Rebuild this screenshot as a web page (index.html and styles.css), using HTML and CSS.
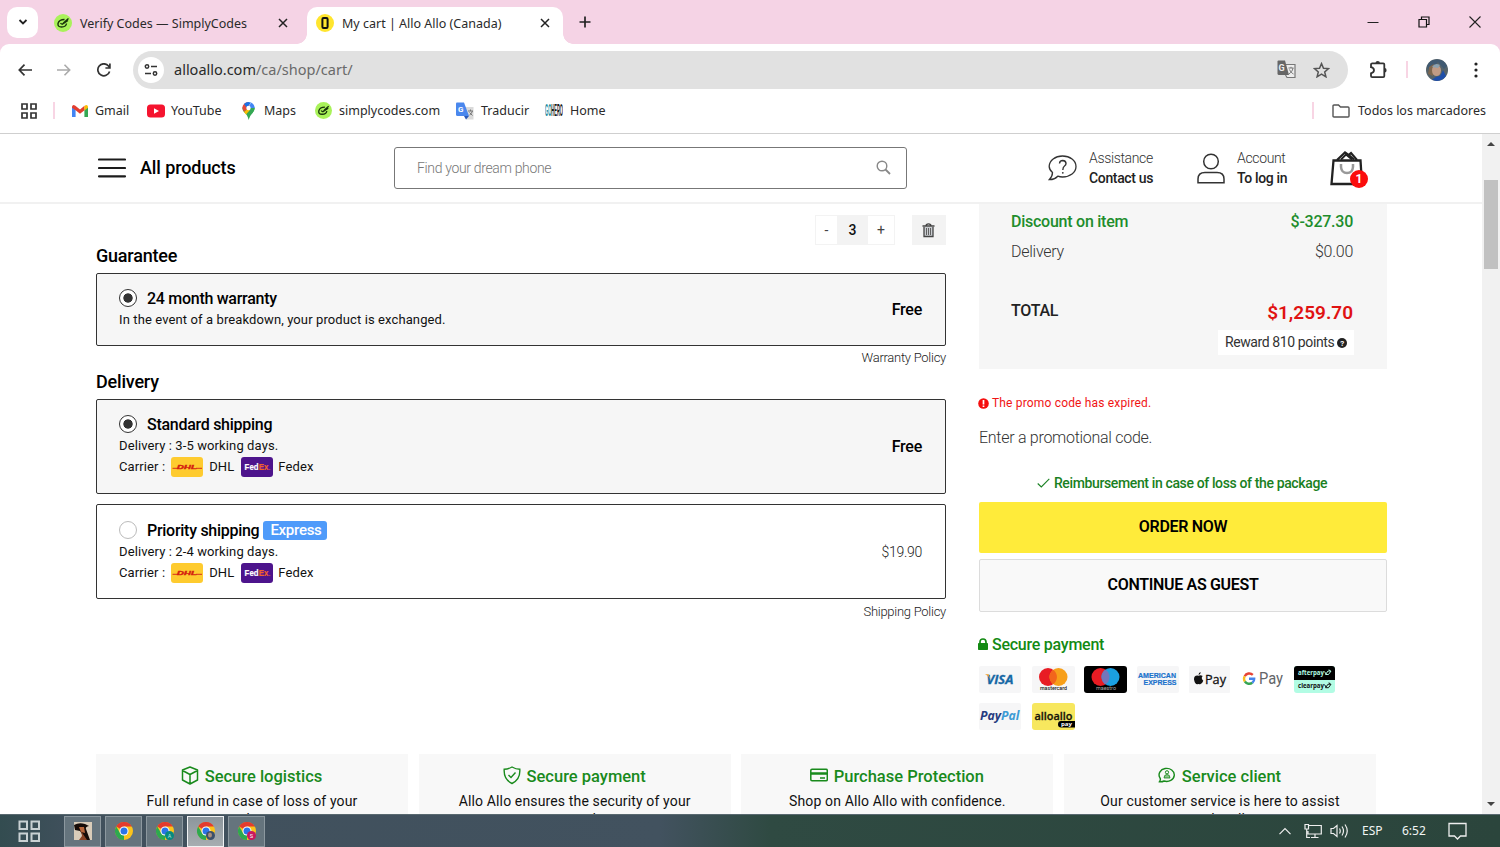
FILE: index.html
```
<!DOCTYPE html>
<html lang="en">
<head>
    <meta charset="UTF-8">
    <title>My cart | Allo Allo (Canada)</title>
    <link rel="stylesheet" href="styles.css">
</head>
<body>
    <svg class="defs">
        <symbol id="x" viewBox="0 0 10 10"><path d="M1 1l8 8M9 1L1 9" stroke="#222" stroke-width="1.5"/></symbol>
        <symbol id="simply" viewBox="0 0 18 18">
            <circle cx="9" cy="9" r="9" fill="#a9f25a"/>
            <path d="M10.500 5.500Q5 5.500 4 9.500Q3.500 13 7.500 13Q12 13 12.500 9.500M6.500 9Q8 11.500 10 8.500L14.500 4.500M8 10.500L14 6.500" fill="none" stroke="#18330b" stroke-width="1.400"/>
        </symbol>
        <symbol id="chrome" viewBox="0 0 18 18">
            <circle cx="9" cy="9" r="9" fill="#fbc31b"/>
            <path d="M9 9L1.200 4.500A9 9 0 0 1 16.800 4.500H9Z" fill="#e33b2e"/>
            <path d="M1.200 4.500L5.200 11.250L9 13.500L9 18A9 9 0 0 1 1.200 4.500Z" fill="#2da94f"/>
            <circle cx="9" cy="9" r="4.500" fill="#fff"/>
            <circle cx="9" cy="9" r="3.500" fill="#2b74e8"/>
        </symbol>
        <symbol id="dhl" viewBox="0 0 32 20">
            <rect width="32" height="20" rx="3" fill="#fecb2f"/>
            <path d="M1.500 11.300h6M25 11.300h6" stroke="#d8301b" stroke-width="1"/>
            <text x="6" y="12.300" textLength="20" lengthAdjust="spacingAndGlyphs" font-family="Liberation Sans" font-size="6" font-weight="bold" font-style="italic" fill="#d4200f" stroke="#d4200f" stroke-width=".4">DHL</text>
        </symbol>
        <symbol id="fedex" viewBox="0 0 32 20">
            <rect width="32" height="20" rx="3" fill="#4d148c"/>
            <text x="3.500" y="13" textLength="24" lengthAdjust="spacingAndGlyphs" font-family="Liberation Sans" font-size="8.500" font-weight="bold" fill="#fff" stroke="#fff" stroke-width=".2">Fed<tspan fill="#f2622a" stroke="#f2622a">Ex</tspan></text>
            <circle cx="28.800" cy="12.500" r=".6" fill="#f2622a"/>
        </symbol>
    </svg>

    <!-- browser -->
    <div class="tabstrip">
        <div class="tab-search"><svg width="10" height="8" viewBox="0 0 10 8"><path d="M1.500 2L5 5.500L8.500 2" fill="none" stroke="#222" stroke-width="1.800"/></svg></div>
        <div class="tab">
            <svg width="18" height="18"><use href="#simply"/></svg>
            <span>Verify Codes — SimplyCodes</span>
            <svg class="close" width="10" height="10"><use href="#x"/></svg>
        </div>
        <div class="tab active">
            <svg width="18" height="18" viewBox="0 0 18 18"><circle cx="9" cy="9" r="9" fill="#ffe52e"/><rect x="6.400" y="4" width="5.200" height="10" rx="1.200" fill="none" stroke="#111" stroke-width="2"/></svg>
            <span>My cart | Allo Allo (Canada)</span>
            <svg class="close" width="10" height="10"><use href="#x"/></svg>
        </div>
        <svg class="plus" width="12" height="12" viewBox="0 0 12 12"><path d="M6 .5v11M.5 6h11" stroke="#222" stroke-width="1.700"/></svg>
        <div class="window-controls">
            <svg width="12" height="12" viewBox="0 0 12 12"><path d="M.5 6.500h11" stroke="#222"/></svg>
            <svg width="12" height="12" viewBox="0 0 12 12"><path d="M1 3.500h7.500V11H1zM3.500 3V1H11v7.500H9" fill="none" stroke="#111" stroke-width="1.200"/></svg>
            <svg width="12" height="12" viewBox="0 0 12 12"><path d="M.5 .5l11 11M11.500 .5l-11 11" stroke="#222" stroke-width="1.100"/></svg>
        </div>
    </div>

    <div class="toolbar-wrap">
    <div class="toolbar">
        <svg class="back" width="14" height="12" viewBox="0 0 14 12"><path d="M6.500 .7L1.300 6l5.200 5.300M1.500 6H14" fill="none" stroke="#333" stroke-width="1.700"/></svg>
        <svg class="forward" width="14" height="12" viewBox="0 0 14 12"><path d="M7.500 .7L12.700 6l-5.200 5.300M12.500 6H0" fill="none" stroke="#aaa" stroke-width="1.600"/></svg>
        <svg class="reload" width="14" height="14" viewBox="0 0 14 14"><path d="M12.600 8.500A6 6 0 1 1 11.500 3L12.700 4.500M12.900 .5V5H8.400" fill="none" stroke="#333" stroke-width="1.700"/></svg>
        <div class="address">
            <span class="site-info"><svg width="14" height="12" viewBox="0 0 14 12"><g fill="none" stroke="#333" stroke-width="1.500"><circle cx="3" cy="2.500" r="1.700"/><path d="M7 2.500h6M1 9.500h6"/><circle cx="11" cy="9.500" r="1.700"/></g></svg></span>
            <span class="url">alloallo.com<i>/ca/shop/cart/</i></span>
            <svg class="translate" width="19" height="19" viewBox="0 0 19 19"><path d="M9 4.500h9v13h-8L8.500 15" fill="#ededed" stroke="#777" stroke-width="1.200"/><path d="M.5 1.500Q.5 .5 1.500 .5H8L12 15H2Q.5 15 .5 13.500z" fill="#666"/><text x="1.500" y="11" font-family="Roboto" font-size="9" font-weight="bold" fill="#eee">G</text><path d="M11.500 8h5M14 6.800V8M16 8c-.5 3-2 4.500-4 6M12.500 9.500c1 2 2 3.500 4 4.500" fill="none" stroke="#777"/></svg>
            <svg class="star" width="17" height="16" viewBox="0 0 17 16"><path d="M8.500 1.600l2 4.600 5 .4-3.800 3.300 1.200 4.900-4.400-2.600-4.400 2.600 1.200-4.900L1.500 6.600l5-.4z" fill="none" stroke="#555" stroke-width="1.500"/></svg>
        </div>
        <svg class="puzzle" width="19" height="19" viewBox="0 0 19 19"><path d="M2.500 3.300H14.200Q15.300 3.300 15.300 4.400V16Q15.300 17.200 14.200 17.200H3.200Q2 17.200 2 16V13.300Q5 12.500 5 10.200Q5 8 2 7.200V4.400Q2 3.300 3.200 3.300Z" fill="none" stroke="#333" stroke-width="1.800"/><path d="M6.500 3a2.200 2 0 0 1 4.400 0zM15.600 8a2 2.200 0 0 1 0 4.400z" fill="#333"/></svg>
        <span class="pink-line"></span>
        <svg class="avatar" width="22" height="22" viewBox="0 0 22 22"><circle cx="11" cy="11" r="11" fill="#55636a"/><path d="M1 7A11 11 0 0 1 21 7L18 10L12 3L3 14Z" fill="#405a72"/><path d="M3 8L8 5L7 17L2 15Z" fill="#7d674f"/><ellipse cx="10.500" cy="11.500" rx="4.500" ry="5.500" fill="#c09b85"/><path d="M6 8Q9 3 14 6L12 9Z" fill="#8ca2b0"/><path d="M6 20.800Q10 17 14 17Q16 14 17 11L20 17A11 11 0 0 1 6 20.800Z" fill="#1f4faa"/></svg>
        <svg class="dots" width="4" height="16" viewBox="0 0 4 16"><g fill="#222"><circle cx="2" cy="2" r="1.600"/><circle cx="2" cy="8" r="1.600"/><circle cx="2" cy="14" r="1.600"/></g></svg>
    </div>
    <div class="bookmarks">
        <svg class="apps" width="16" height="16" viewBox="0 0 16 16"><path d="M1 1h5v5H1zM10 1h5v5h-5zM1 10h5v5H1zM10 10h5v5h-5z" fill="none" stroke="#333" stroke-width="1.700"/></svg>
        <span class="pink-line"></span>
        <div class="bm b1"><svg width="16" height="12" viewBox="0 0 16 12"><path d="M0 1.500V12h3.600V4.500z" fill="#4285f4"/><path d="M16 1.500V12h-3.600V4.500z" fill="#34a853"/><path d="M0 1.800Q.6-.8 3 .6L8 4.400 12.500 .8V5.300L8 8.800 3.600 5.300 0 2.800z" fill="#e33e2f"/><path d="M12.400 .9Q15.500-1.200 16 1.800V2.800L12.400 5.400z" fill="#fbbc04"/></svg><span>Gmail</span></div>
        <div class="bm b2"><svg width="18" height="14" viewBox="0 0 18 14"><rect width="18" height="13" y=".5" rx="3.500" fill="#f5142f"/><path d="M7 4.200v5.600L12 7z" fill="#fff"/></svg><span>YouTube</span></div>
        <div class="bm b3"><svg width="13" height="18" viewBox="0 0 13 18"><path d="M6.500 18Q6 13.500 2 10A6.300 6.300 0 0 1 .3 5.500L12.700 5.500Q13 8.500 10.500 11T6.500 18z" fill="#34a853"/><path d="M.3 6A6.200 6.200 0 0 1 6.500 0L8 6L2 10z" fill="#e5493a"/><path d="M2 2Q5-1 9 .6L5 6z" fill="#1a73e8"/><path d="M9 .5Q12.500 2 12.700 6L6 7z" fill="#4285f4"/><path d="M12.700 6Q12.500 9 10 11.500L2 10 6.500 6z" fill="#34a853"/><path d="M2 10L6.500 6 8 8 4 12.500z" fill="#fbbc04"/><circle cx="6.500" cy="6" r="2.200" fill="#fff"/></svg><span>Maps</span></div>
        <div class="bm b4"><svg width="17" height="17"><use href="#simply"/></svg><span>simplycodes.com</span></div>
        <div class="bm b5"><svg width="18" height="18" viewBox="0 0 18 18"><path d="M8 5h9.500v12.500H10z" fill="#dadada"/><path d="M0 1.500Q0 .5 1 .5H8L13 14H1.500Q0 14 0 12.500z" fill="#4a87ed"/><path d="M8 14h5l-3 3.500z" fill="#2857b8"/><text x="2" y="9.800" font-family="Roboto" font-size="8" font-weight="bold" fill="#fff">G</text><path d="M12 9h5M14.500 7.500V9M16.500 9Q15.500 12 13.500 13M13.500 10.500L16.500 13.500" stroke="#777" fill="none"/></svg><span>Traducir</span></div>
        <div class="bm b6"><svg width="18" height="15" viewBox="0 0 18 15"><g transform="scale(.36 1.150)"><text x="0" y="11.500" textLength="50" lengthAdjust="spacingAndGlyphs" font-family="Liberation Sans" font-size="14" font-weight="bold" fill="#1d8ba1">GO<tspan fill="#1c1c1c">HERO</tspan></text></g></svg><span>Home</span></div>
        <span class="pink-line right"></span>
        <div class="bm b7"><svg width="18" height="14" viewBox="0 0 18 14"><path d="M1 2Q1 1 2 1h4.500l2 2H16q1 0 1 1v8q0 1-1 1H2q-1 0-1-1z" fill="none" stroke="#555" stroke-width="1.400"/></svg><span>Todos los marcadores</span></div>
    </div>
    </div>

    <!-- page -->
    <div class="viewport">
        <div class="page">
            <header>
                <svg class="burger" width="28" height="20" viewBox="0 0 28 20"><path d="M1 1.500h26M1 10h26M1 18.300h26" stroke="#1c1c1c" stroke-width="2.200" stroke-linecap="round"/></svg>
                <a class="all-products">All products</a>
                <div class="search">
                    <span>Find your dream phone</span>
                    <svg width="15" height="15" viewBox="0 0 15 15"><circle cx="6" cy="6" r="4.800" fill="none" stroke="#888" stroke-width="1.400"/><path d="M9.500 9.500l4.500 4.500" stroke="#888" stroke-width="1.800"/></svg>
                </div>
                <div class="help">
                    <svg width="29" height="26" viewBox="0 0 29 26"><path d="M4.500 17.500Q1 14.500 1.200 11C1.500 5.500 7 1 14.500 1S28 5.500 28 11.500 22 22 14.500 22Q12 22 9.800 21.200Q6 25 1.200 24.700Q4.500 21.500 4.500 17.500Z" fill="none" stroke="#333" stroke-width="1.300"/><path d="M11.500 8.500Q11.700 5.500 14.700 5.500Q18 5.700 18 8.500Q18 10 16.500 11T14.800 15" fill="none" stroke="#333" stroke-width="1.400"/><circle cx="14.800" cy="17.800" r=".9" fill="#333"/></svg>
                    <div><small>Assistance</small><b>Contact us</b></div>
                </div>
                <div class="account">
                    <svg width="28" height="31" viewBox="0 0 28 31"><circle cx="14" cy="8.500" r="7.300" fill="none" stroke="#333" stroke-width="1.500"/><path d="M1 29.800V26Q1 19.500 8 19.500H20Q27 19.500 27 26V29.800Z" fill="none" stroke="#333" stroke-width="1.500"/></svg>
                    <div><small>Account</small><b>To log in</b></div>
                </div>
                <div class="bag">
                    <svg width="34" height="35" viewBox="0 0 34 35"><path d="M3.500 9.500H30.500L32 33H1.500Z" fill="none" stroke="#222" stroke-width="2.300"/><path d="M7 9L15 1.500L18.500 4L21 2L27 9" fill="none" stroke="#222" stroke-width="2.200"/><path d="M11 8.500L16 3.500L22 8.500M19 4L24 8.500" stroke="#222" stroke-width="1.800" fill="none"/><path d="M11 13V16Q11.500 22 17 22T23 16V13" fill="none" stroke="#999" stroke-width="2.500"/></svg>
                    <span class="badge">1</span>
                </div>
            </header>

            <main>
                <section class="options">
                    <div class="qty">
                        <span class="minus">-</span><span class="count">3</span><span class="add">+</span>
                        <span class="trash"><svg width="13" height="15" viewBox="0 0 13 15"><path d="M.5 3h12M4 3Q4 .8 6.500 .8T9 3" fill="none" stroke="#444" stroke-width="1.300"/><path d="M2 4v9.500h9V4" fill="#c9ccd0" stroke="#444" stroke-width="1.300"/><path d="M4.500 5v7M6.500 5v7M8.500 5v7" stroke="#555" stroke-width=".9"/></svg></span>
                    </div>
                    <h3 class="first">Guarantee</h3>
                    <div class="card selected w">
                        <div>
                            <p class="title"><i class="radio on"></i><span>24 month warranty</span></p>
                            <p>In the event of a breakdown, your product is exchanged.</p>
                        </div>
                        <b>Free</b>
                    </div>
                    <p class="policy">Warranty Policy</p>
                    <h3>Delivery</h3>
                    <div class="card selected">
                        <div>
                            <p class="title"><i class="radio on"></i><span>Standard shipping</span></p>
                            <p>Delivery : 3-5 working days.</p>
                            <p class="carrier">Carrier : <svg class="dhl" width="32" height="20"><use href="#dhl"/></svg> DHL <svg class="fedex" width="32" height="20"><use href="#fedex"/></svg> Fedex</p>
                        </div>
                        <b>Free</b>
                    </div>
                    <div class="card last">
                        <div>
                            <p class="title"><i class="radio"></i><span>Priority shipping</span><em>Express</em></p>
                            <p>Delivery : 2-4 working days.</p>
                            <p class="carrier">Carrier : <svg class="dhl" width="32" height="20"><use href="#dhl"/></svg> DHL <svg class="fedex" width="32" height="20"><use href="#fedex"/></svg> Fedex</p>
                        </div>
                        <span class="price">$19.90</span>
                    </div>
                    <p class="policy">Shipping Policy</p>
                </section>

                <aside>
                    <div class="summary">
                        <div class="row discount"><span>Discount on item</span><span class="amount">$-327.30</span></div>
                        <div class="row light"><span>Delivery</span><span class="amount">$0.00</span></div>
                        <div class="row total"><span>TOTAL</span><strong>$1,259.70</strong></div>
                        <div class="reward"><span>Reward 810 points</span><svg width="10" height="10" viewBox="0 0 10 10"><circle cx="5" cy="5" r="5" fill="#222"/><text x="5" y="7.800" text-anchor="middle" font-family="Roboto" font-size="8" font-weight="bold" fill="#fff">?</text></svg></div>
                    </div>
                    <p class="error"><svg width="11" height="11" viewBox="0 0 11 11"><circle cx="5.500" cy="5.500" r="5.300" fill="#f50f0f"/><path d="M5.500 2v4.500M5.500 7.500V9" stroke="#fff" stroke-width="1.700"/></svg><span>The promo code has expired.</span></p>
                    <p class="promo">Enter a promotional code.</p>
                    <p class="refund"><svg width="13" height="10" viewBox="0 0 13 10"><path d="M.7 5.500L4.300 9L12.300 .8" fill="none" stroke="#198022" stroke-width="1.100"/></svg><span>Reimbursement in case of loss of the package</span></p>
                    <a class="btn order">ORDER NOW</a>
                    <a class="btn guest">CONTINUE AS GUEST</a>
                    <p class="secure"><svg width="10" height="12" viewBox="0 0 10 12"><rect y="5" width="10" height="7" rx=".8" fill="#138a13"/><path d="M2 5.500V4Q2 1 5 1T8 4V5.500" fill="none" stroke="#138a13" stroke-width="1.700"/></svg><span>Secure payment</span></p>
                    <div class="pays">
                        <svg width="42" height="27" viewBox="0 0 42 27"><rect width="42" height="27" rx="2" fill="#f6f6f7"/><text x="7.500" y="17.500" textLength="27" lengthAdjust="spacingAndGlyphs" font-family="Open Sans" font-size="13" font-weight="bold" font-style="italic" fill="#1668a5" stroke="#1668a5" stroke-width=".3">VISA</text><path d="M6 8.300h3.500l1.800 5Q9.500 9.500 6 8.300z" fill="#f0a02a"/></svg>
                        <svg width="43" height="27" viewBox="0 0 43 27"><rect width="43" height="27" rx="2" fill="#f6f6f7"/><circle cx="16" cy="11" r="9" fill="#e81c24"/><circle cx="26.500" cy="11" r="9" fill="#f79f1a"/><path d="M21.200 3.700a9 9 0 0 1 0 14.600a9 9 0 0 1 0-14.600z" fill="#f2651c"/><text x="8" y="24" textLength="27" lengthAdjust="spacingAndGlyphs" font-family="Roboto" font-size="5.500" font-weight="500" fill="#222">mastercard</text></svg>
                        <svg width="43" height="27" viewBox="0 0 43 27"><rect width="43" height="27" rx="3" fill="#000"/><circle cx="16.500" cy="11" r="9" fill="#e81c24"/><circle cx="26.500" cy="11" r="9" fill="#1ba0e1"/><path d="M21.500 3.500a9 9 0 0 1 0 15a9 9 0 0 1 0-15z" fill="#7476bb"/><text x="12" y="23.800" textLength="20" lengthAdjust="spacingAndGlyphs" font-family="Roboto" font-size="5.500" fill="#aaa">maestro</text></svg>
                        <svg width="42" height="27" viewBox="0 0 42 27"><rect width="42" height="27" rx="2" fill="#f6f6f7"/><g font-family="Liberation Sans" font-size="7.200" font-weight="bold" fill="#1b72cc" stroke="#1b72cc" stroke-width=".2"><text x="1" y="12.200" textLength="38" lengthAdjust="spacingAndGlyphs">AMERICAN</text><text x="6.500" y="18.500" textLength="33" lengthAdjust="spacingAndGlyphs">EXPRESS</text></g></svg>
                        <svg width="41" height="27" viewBox="0 0 41 27"><rect width="41" height="27" rx="1" fill="#f6f6f7"/><path d="M9.500 9.700Q11.500 8.500 13.700 10Q11.600 12 14.300 14.800Q12.700 19 10.500 18.200Q9.500 17.700 8.300 18.300Q6 18.500 5 13.500Q4.800 9 9.500 9.700ZM9.500 9Q9.500 6.700 11.700 6Q11.700 8.600 9.500 9Z" fill="#111"/><text x="16" y="18" textLength="21" lengthAdjust="spacingAndGlyphs" font-family="Open Sans" font-size="13" fill="#111" stroke="#111" stroke-width=".3">Pay</text></svg>
                        <svg width="42" height="27" viewBox="0 0 42 27"><g fill="none" stroke-width="2.400"><path d="M10.800 8.800A5.200 5.200 0 0 0 2.700 10.200" stroke="#e64436"/><path d="M2.700 10.200A5.200 5.200 0 0 0 2.900 15.500" stroke="#f8bd20"/><path d="M2.900 15.500A5.200 5.200 0 0 0 10.300 16.800" stroke="#36a552"/><path d="M10.300 16.800Q12.300 15 12.200 12.700H7" stroke="#4684ec"/></g><text x="17" y="18" textLength="24" lengthAdjust="spacingAndGlyphs" font-family="Roboto" font-size="16" fill="#636569">Pay</text></svg>
                        <svg width="41" height="27" viewBox="0 0 41 27"><rect width="41" height="27" rx="3" fill="#b2fce4"/><path d="M0 14V3Q0 0 3 0H38Q41 0 41 3V14Z" fill="#000"/><g font-family="Open Sans" font-size="7" font-weight="bold"><text x="4" y="8.500" textLength="26" lengthAdjust="spacingAndGlyphs" fill="#b2fce4">afterpay</text><text x="4" y="21.800" textLength="26" lengthAdjust="spacingAndGlyphs" fill="#111">clearpay</text></g><path d="M31.500 8.500h3l2.500-3.500h-3zM32 8l-1.500-2.500M36 5l-1-1.500" fill="none" stroke="#b2fce4"/><path d="M31.500 21.700h3l2.500-3.500h-3zM32 21l-1.500-2.500M36 18l-1-1.500" fill="none" stroke="#111"/></svg>
                        <svg width="42" height="27" viewBox="0 0 42 27"><rect width="42" height="27" rx="2" fill="#f6f6f7"/><g font-family="Open Sans" font-size="11.500" font-weight="bold" font-style="italic"><text x="1" y="17" textLength="39.500" lengthAdjust="spacingAndGlyphs" fill="#263b80">Pay<tspan fill="#3b9bd5">Pal</tspan></text></g></svg>
                        <svg width="43" height="27" viewBox="0 0 43 27"><rect width="43" height="27" rx="3" fill="#f7e75e"/><text x="2.500" y="17" textLength="38" lengthAdjust="spacingAndGlyphs" font-family="Open Sans" font-size="11" font-weight="600" fill="#16150a" stroke="#16150a" stroke-width=".3">alloallo</text><path d="M29 18H43V24.500H29Q26 24.500 26 21.300T29 18Z" fill="#000"/><text x="29" y="23" textLength="11" lengthAdjust="spacingAndGlyphs" font-family="Open Sans" font-size="6" font-weight="bold" fill="#fff">pay</text></svg>
                    </div>
                </aside>
            </main>

            <div class="features">
                <div><h4><svg width="18" height="19" viewBox="0 0 18 19"><path d="M9 1l7.500 3v10L9 18l-7.500-4V4zM1.500 4.500L9 8.500l7.500-4M9 8.500V18" fill="none" stroke="#198a1c" stroke-width="1.500" stroke-linejoin="round"/></svg><span>Secure logistics</span></h4><p>Full refund in case of loss of your<br>package.</p></div>
                <div><h4><svg width="18" height="19" viewBox="0 0 18 19"><path d="M9 1Q13 3.300 16.800 3.300Q17.500 13.500 9 17.500Q.5 13.500 1.200 3.300Q5 3.300 9 1Z" fill="none" stroke="#198a1c" stroke-width="1.400"/><path d="M5.500 9l2.500 2.500L12.500 6.500" fill="none" stroke="#198a1c" stroke-width="1.400"/></svg><span>Secure payment</span></h4><p>Allo Allo ensures the security of your<br>payment data.</p></div>
                <div><h4><svg width="18" height="19" viewBox="0 0 18 19"><rect x=".8" y="3.300" width="16.500" height="11.500" rx="1.200" fill="none" stroke="#198a1c" stroke-width="1.500"/><path d="M1 7.500h16" stroke="#198a1c" stroke-width="2.500"/><path d="M10 12h5" stroke="#198a1c" stroke-width="1.500"/></svg><span>Purchase Protection</span></h4><p>Shop on Allo Allo with confidence.</p></div>
                <div><h4><svg width="18" height="19" viewBox="0 0 18 19"><path d="M1.500 15.700Q3 13.500 2 12A7.600 6.500 0 1 1 6 15Q4 16 1.500 15.700Z" fill="none" stroke="#198a1c" stroke-width="1.400"/><circle cx="9" cy="6.300" r="1.600" fill="none" stroke="#198a1c"/><path d="M6 12Q6 8.500 9 8.500T12 12Z" fill="#8cc48d" stroke="#198a1c" stroke-width=".8"/></svg><span>Service client</span></h4><p>Our customer service is here to assist<br>you locally.</p></div>
            </div>
        </div>
        <div class="scrollbar"><i class="up"></i><span></span><i class="down"></i></div>
    </div>

    <!-- taskbar -->
    <div class="taskbar">
        <svg class="start" width="23" height="23" viewBox="0 0 23 23"><path d="M1.500 1.500h7.500v7.500H1.500zM13.500 1.500H21v7.500h-7.500zM1.500 13.500h7.500V21H1.500zM13.500 13.500H21V21h-7.500z" fill="none" stroke="#c9d1d3" stroke-width="2"/></svg>
        <div class="task"><svg width="18" height="18" viewBox="0 0 18 18"><rect width="18" height="18" fill="#d9ccb9"/><path d="M0 3Q5 0 11 2L15 4Q11 5 12 7L16 18H12L6 9L1 8Z" fill="#160c08"/><path d="M5 5h5l1 6-4-1z" fill="#b8673b"/><path d="M7 9l6 9H5L8 14z" fill="#8a4425"/></svg></div>
        <div class="task"><svg width="18" height="18"><use href="#chrome"/></svg></div>
        <div class="task"><svg width="18" height="18" viewBox="0 0 18 18"><use href="#chrome" width="18" height="18"/><circle cx="13.500" cy="13.500" r="4.500" fill="#078a80"/><text x="13.500" y="15.500" text-anchor="middle" font-size="5.500" font-family="Roboto" fill="#b8e0dc">A</text></svg></div>
        <div class="task current"><svg width="18" height="18" viewBox="0 0 18 18"><use href="#chrome" width="18" height="18"/><circle cx="13.500" cy="13.500" r="4.500" fill="#3c506b"/><ellipse cx="13" cy="13" rx="2" ry="2.500" fill="#a98d7c"/></svg></div>
        <div class="task"><svg width="18" height="18" viewBox="0 0 18 18"><use href="#chrome" width="18" height="18"/><circle cx="13.500" cy="13.500" r="4.500" fill="#c9165f"/><text x="13.500" y="15.500" text-anchor="middle" font-size="5.500" font-family="Roboto" fill="#fff">S</text></svg></div>
        <div class="tray">
            <svg width="12" height="8" viewBox="0 0 12 8"><path d="M.5 7.200L6 1.500l5.500 5.700" fill="none" stroke="#eee" stroke-width="1.200"/></svg>
            <svg class="net" width="18" height="16" viewBox="0 0 18 16"><path d="M5 2.500h12.300v8.500H4V8M11 11v3.500M7 14.500h7.500M1 1.500h3.500V6H1zM2.700 6v8.500H6" fill="none" stroke="#eee" stroke-width="1.200"/></svg>
            <svg class="vol" width="19" height="16" viewBox="0 0 19 16"><path d="M1 5.500h2.500L7 2.500v11L3.500 10.500H1zM9.500 5.500Q11 8 9.500 10.500M12 3.500Q15 8 12 12.500M15 1.500Q19.500 8 15 14.500" fill="none" stroke="#eee" stroke-width="1.200"/></svg>
            <span class="lang">ESP</span>
            <span class="clock">6:52</span>
            <svg class="note" width="19" height="18" viewBox="0 0 19 18"><path d="M1 1.500h17v12.500h-5.500L9.500 17L6.500 14H1z" fill="none" stroke="#eee" stroke-width="1.300"/></svg>
        </div>
    </div>
</body>
</html>
```
FILE: styles.css
```
* {
    box-sizing: border-box;
}
body {
    margin: 0;
    height: 847px;
    overflow: hidden;
    font-family: Roboto, sans-serif;
    color: #111;
    background: #fff;
}
p, h3, h4 {
    margin: 0;
}
svg {
    display: block;
    flex: none;
}
.defs {
    display: none;
}

/* browser */
.tabstrip, .toolbar, .bookmarks, .taskbar {
    font-family: "Noto Sans", sans-serif;
    display: flex;
    align-items: center;
    white-space: nowrap;
    color: #2a2a2a;
}
.tabstrip {
    height: 44px;
    background: #f5d3e5;
    font-size: 12.5px;
}
.tab-search {
    width: 31px;
    height: 31px;
    margin-left: 7px;
    border-radius: 10px;
    background: #fff;
    display: flex;
    align-items: center;
    justify-content: center;
}
.tab {
    display: flex;
    align-items: center;
    width: 253px;
    height: 37px;
    margin-top: 7px;
    padding: 0 0 5px 15px;
    margin-left: 1px;
}
.tab span {
    margin-left: 8px;
}
.tab .close {
    margin-left: auto;
    margin-right: 4px;
}
.tab.active {
    position: relative;
    width: 256px;
    margin-left: 15px;
    padding-left: 9px;
    border-radius: 10px 10px 0 0;
    background: #fff;
}
.tab.active::before, .tab.active::after {
    content: "";
    position: absolute;
    bottom: 0;
    width: 10px;
    height: 10px;
}
.tab.active::before {
    left: -10px;
    background: radial-gradient(circle at 0 0, #f5d3e5 9.5px, #fff 10px);
}
.tab.active::after {
    right: -10px;
    background: radial-gradient(circle at 100% 0, #f5d3e5 9.5px, #fff 10px);
}
.tab.active .close {
    margin-right: 13px;
}
.plus {
    margin-left: 16px;
}
.window-controls {
    display: flex;
    gap: 39px;
    margin-left: auto;
    margin-right: 19px;
}
.toolbar-wrap {
    height: 90px;
    background: #f5d3e5;
    border-bottom: 1px solid #cfcfcf;
}
.toolbar {
    height: 51px;
    background: #fff;
    border-radius: 9px 9px 0 0;
}
.back {
    margin-left: 18px;
}
.forward {
    margin-left: 25px;
}
.reload {
    margin-left: 26px;
}
.address {
    width: 1215px;
    height: 38px;
    margin-left: 22px;
    border-radius: 19px;
    background: #e1e1e1;
    display: flex;
    align-items: center;
    font-size: 14.5px;
}
.site-info {
    width: 26px;
    height: 26px;
    margin-left: 5px;
    border-radius: 50%;
    background: #fff;
    display: flex;
    align-items: center;
    justify-content: center;
}
.url {
    margin-left: 10px;
    padding-bottom: 1px;
}
.url i {
    font-style: normal;
    color: #6a6a6a;
}
.translate {
    margin-left: auto;
}
.star {
    margin: 0 18px 0 17px;
}
.puzzle {
    margin-left: 21px;
}
.pink-line {
    width: 2px;
    height: 17px;
    background: #f8d5e4;
}
.toolbar .pink-line {
    margin-left: 18px;
}
.avatar {
    margin-left: 18px;
}
.dots {
    margin-left: 26px;
}
.bookmarks {
    height: 38px;
    padding-bottom: 7px;
    background: #fff;
    font-size: 12.5px;
}
.apps {
    margin-left: 21px;
}
.bookmarks .pink-line {
    margin-left: 16px;
    margin-right: 17px;
}
.bm {
    display: flex;
    align-items: center;
    gap: 7px;
}
.b1 { width: 75px; }
.b2 { width: 95px; gap: 6px; }
.b3 { width: 73px; gap: 9px; }
.b4 { width: 141px; }
.b5 { width: 89px; }
.bookmarks .pink-line.right {
    margin-left: auto;
    margin-right: 18px;
}
.b7 {
    gap: 8px;
    width: 168px;
}

/* page */
.viewport {
    display: flex;
    height: 680px;
}
.page {
    width: 1482px;
    height: 680px;
    overflow: hidden;
}
header {
    display: flex;
    align-items: center;
    height: 70px;
    border-bottom: 2px solid #f1f1f1;
}
.burger {
    margin-left: 98px;
}
.all-products {
    width: 254px;
    margin-left: 14px;
    padding-bottom: 2px;
    font-size: 18px;
    font-weight: 500;
    letter-spacing: -0.1px;
    color: #000;
}
.search {
    display: flex;
    align-items: center;
    justify-content: space-between;
    width: 513px;
    height: 42px;
    padding: 0 15px 1px 22px;
    border: 1px solid #777;
    border-radius: 3px;
    font-size: 14px;
    font-weight: 300;
    letter-spacing: -0.34px;
    color: #777;
}
.help, .account {
    display: flex;
    align-items: center;
    line-height: 20px;
    font-size: 14px;
    letter-spacing: -0.35px;
}
.help {
    width: 148px;
    margin-left: 141px;
    gap: 12px;
}
.account {
    width: 133px;
    gap: 12px;
    margin-left: 1px;
}
header small, header b {
    display: block;
    font-size: 14px;
    font-weight: 300;
    color: #333;
    white-space: nowrap;
}
header b {
    font-weight: 500;
    color: #222;
}
.bag {
    position: relative;
}
.badge {
    position: absolute;
    left: 20px;
    top: 19px;
    width: 18px;
    height: 18px;
    border-radius: 50%;
    background: #fb0d0d;
    color: #fff;
    font-size: 12px;
    font-weight: 700;
    line-height: 18px;
    text-align: center;
}
main {
    display: grid;
    grid-template-columns: 850px 408px;
    column-gap: 33px;
    height: 550px;
    padding-left: 96px;
}
.qty {
    display: flex;
    justify-content: flex-end;
    height: 30px;
    margin-top: 11px;
    font-size: 14px;
    line-height: 28px;
    text-align: center;
}
.minus, .add {
    width: 23px;
    border: 1px solid #f3f3f3;
    color: #444;
}
.add {
    width: 28px;
}
.count {
    width: 29px;
    background: #f3f3f3;
    font-weight: 500;
    line-height: 30px;
}
.trash {
    display: flex;
    align-items: center;
    justify-content: center;
    width: 34px;
    margin-left: 17px;
    padding-right: 2px;
    background: #f3f3f3;
}
h3 {
    height: 29px;
    font-size: 18px;
    font-weight: 500;
    line-height: 23px;
    letter-spacing: -0.2px;
    color: #000;
}
h3.first {
    height: 28px;
    line-height: 22px;
}
.card {
    display: flex;
    justify-content: space-between;
    align-items: center;
    height: 95px;
    padding: 0 23px 0 22px;
    border: 1px solid #333;
    border-radius: 2px;
    font-size: 13px;
    letter-spacing: 0.11px;
}
.card > div {
    align-self: flex-start;
    padding-top: 13px;
}
.card.selected {
    background: #f6f6f6;
    margin-bottom: 10px;
}
.card.w {
    height: 73px;
    margin-bottom: 0;
}
.card.last > div {
    padding-top: 14px;
}
.card p {
    line-height: 21px;
}
.card .title {
    display: flex;
    align-items: center;
    height: 22px;
    font-size: 16px;
    font-weight: 500;
    letter-spacing: -0.28px;
    color: #000;
}
.card .carrier {
    display: flex;
    align-items: center;
}
.dhl {
    margin: 0 6px;
}
.fedex {
    margin: 0 5px 0 7px;
}
.card b {
    font-size: 16px;
    font-weight: 500;
    letter-spacing: -0.25px;
    color: #000;
}
.price {
    font-size: 14px;
    font-weight: 300;
    letter-spacing: -0.3px;
    color: #222;
}
.radio {
    width: 18px;
    height: 18px;
    margin-right: 10px;
    border: 1px solid #bbb;
    border-radius: 50%;
    background: #fff;
}
.radio.on {
    border-color: #333;
    background: radial-gradient(circle, #333 4.3px, #fff 5px);
}
em {
    height: 19px;
    margin-left: 4px;
    padding: 0 5px 0 7px;
    border-radius: 3px;
    background: #4f9bfa;
    color: #fff;
    font-size: 15px;
    font-style: normal;
    line-height: 19px;
}
.policy {
    height: 24px;
    font-size: 13px;
    font-weight: 300;
    line-height: 24px;
    letter-spacing: -0.27px;
    text-align: right;
    color: #222;
}
.card.last + .policy {
    line-height: 26px;
}
.summary {
    height: 165px;
    padding: 3px 34px 0 32px;
    background: #f6f6f6;
}
.row {
    display: flex;
    justify-content: space-between;
    font-size: 16px;
    line-height: 30px;
    letter-spacing: -0.25px;
}
.amount {
    letter-spacing: -0.25px;
}
.discount {
    font-weight: 500;
    color: #218d2c;
}
.light {
    font-weight: 300;
    color: #333;
}
.total {
    padding-top: 29px;
    font-weight: 500;
    color: #222;
}
.total strong {
    padding-top: 2px;
    font-size: 19px;
    font-weight: 600;
    letter-spacing: 0;
    color: #e01212;
}
.reward {
    display: flex;
    align-items: center;
    gap: 3px;
    width: 136px;
    height: 25px;
    margin: 2px -1px 0 auto;
    padding: 0 6px 1px 7px;
    background: #fff;
    font-size: 14px;
    letter-spacing: -0.4px;
    color: #333;
    white-space: nowrap;
}
.reward svg {
    margin-top: 1px;
}
.error, .refund, .secure {
    display: flex;
    align-items: center;
    gap: 3px;
}
.error {
    height: 20px;
    margin: 24px 0 0 -1px;
    font-size: 12px;
    letter-spacing: 0.17px;
    color: #f01414;
}
.promo {
    margin-top: 15px;
    font-size: 16px;
    font-weight: 300;
    line-height: 20px;
    letter-spacing: -0.28px;
    color: #333;
}
.refund {
    justify-content: center;
    gap: 4px;
    height: 20px;
    margin-top: 25px;
    padding-right: 2px;
    font-size: 14px;
    font-weight: 500;
    letter-spacing: -0.37px;
    color: #198022;
}
.btn {
    display: block;
    border-radius: 2px;
    font-size: 16px;
    font-weight: 600;
    letter-spacing: -0.32px;
    text-align: center;
    color: #000;
}
.order {
    height: 51px;
    margin-top: 9px;
    background: #ffeb3a;
    line-height: 49px;
}
.guest {
    height: 53px;
    margin-top: 6px;
    border: 1px solid #dcdcdc;
    background: #f9f9f9;
    line-height: 49px;
}
.secure {
    height: 20px;
    margin: 22px 0 0 -1px;
    gap: 4px;
    font-size: 16px;
    font-weight: 500;
    letter-spacing: -0.25px;
    color: #138a13;
}
.pays {
    display: grid;
    grid-template-columns: repeat(7, 52.5px);
    row-gap: 10px;
    width: 408px;
    margin-top: 12px;
}
.features {
    display: grid;
    grid-template-columns: repeat(4, 312px);
    column-gap: 10.67px;
    height: 90px;
    padding-left: 96px;
}
.features > div {
    padding-top: 10px;
    background: #f8f8f8;
    font-size: 14px;
    line-height: 19px;
    letter-spacing: 0.14px;
    text-align: center;
}
.features p {
    padding-top: 3px;
    line-height: 18px;
}
h4 {
    display: flex;
    align-items: center;
    justify-content: center;
    gap: 6px;
    height: 25px;
    font-size: 16.5px;
    font-weight: 500;
    letter-spacing: 0;
    color: #198a1c;
}
h4 svg {
    margin: -3px 0 0 -1px;
}
.scrollbar {
    display: flex;
    flex-direction: column;
    align-items: center;
    width: 18px;
    background: #f1f1f1;
}
.scrollbar span {
    width: 14px;
    height: 89px;
    margin-top: 34px;
    background: #c1c1c1;
}
.up, .down {
    border: 4px solid transparent;
    border-top-width: 0;
    border-bottom: 4px solid #444;
    margin-top: 8px;
}
.down {
    border-top: 4px solid #444;
    border-bottom-width: 0;
    margin-top: auto;
    margin-bottom: 8px;
}

/* taskbar */
.taskbar {
    height: 33px;
    border-top: 1px solid #596970;
    background: linear-gradient(90deg, #334c50 0, #40505c 70px, #42525f 660px, #2f4a42 770px, #2b453c 1500px);
}
.start {
    margin-left: 18px;
    margin-right: 23px;
}
.task {
    display: flex;
    align-items: center;
    justify-content: center;
    width: 37px;
    height: 31px;
    margin-right: 4px;
    border: 1px solid #8c989f;
    background: #65747d;
}
.task.current {
    border-color: #f0f2f3;
    background: linear-gradient(#8c969c, #a7adb1);
}
.tray {
    display: flex;
    align-items: center;
    margin-left: auto;
    margin-right: 33px;
    padding-bottom: 1px;
    font-size: 12px;
    color: #f2f5f4;
}
.net {
    margin-left: 13px;
}
.vol {
    margin-left: 8px;
}
.lang {
    width: 21px;
    margin-left: 13px;
}
.clock {
    width: 25px;
    margin-left: 19px;
}
.note {
    margin-left: 21px;
}
```
